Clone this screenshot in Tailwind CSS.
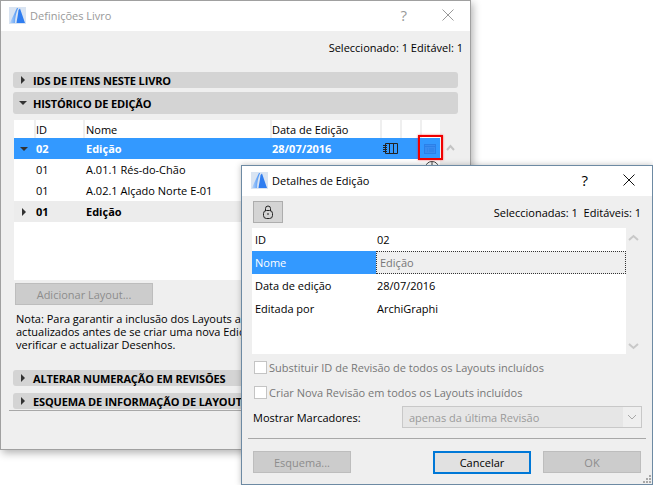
<!DOCTYPE html>
<html lang="pt">
<head>
  <meta charset="UTF-8" />
  <title>Definições Livro</title>
  <script src="https://cdn.jsdelivr.net/npm/@tailwindcss/browser@4"></script>
</head>
<body class="bg-white">
  <div class="relative w-[653px] h-[485px] overflow-hidden bg-white font-['Open_Sans',sans-serif] text-[11px] leading-[13px] text-black">

    <!-- janela de trás -->
    <div class="absolute left-0 top-0 w-[471px] h-[450px] flex flex-col bg-[#efefef] border border-[#a0a0a0] shadow-[2px_3px_8px_rgba(0,0,0,0.3)]">
      <div class="h-[30px] shrink-0 bg-white flex items-center pl-[8px] pb-[2px]">
        <svg width="17" height="17" viewBox="0 0 17 17" class="shrink-0">
          <defs><linearGradient id="logoA" x1="0" y1="0" x2="1" y2="0"><stop offset="0" stop-color="#b9d6fa" /><stop offset="1" stop-color="#3f8df5" /></linearGradient></defs>
          <rect width="17" height="17" fill="#d9e4f2" />
          <path d="M1 16 C3 11 6 5 8 1 H9 C7 6 6 11 6 16 Z" fill="url(#logoA)" />
          <path d="M9.5 3 C9 8 8 12 7.5 16 H16 L11 1.5 Z" fill="#2f7df0" />
        </svg>
        <span class="ml-[4px] text-[#999]">Definições Livro</span>
        <span class="ml-auto text-[15px] text-[#999] mr-[35px]">?</span>
        <svg width="12" height="12" viewBox="0 0 12 12" class="mr-[16px]"><path d="M.5.5l11 11M11.5.5l-11 11" stroke="#999" fill="none" /></svg>
      </div>

      <div class="h-[17px] mt-[10px] shrink-0 pr-[7px] text-right">Seleccionado: 1 Editável: 1</div>

      <div class="mt-[14px] mx-[12px] h-[16px] shrink-0 bg-[#d4d4d4] rounded-[3px] flex items-center font-bold tracking-[-0.15px] pl-[8px]">
        <span class="w-0 h-0 border-y-[4px] border-y-transparent border-l-[4px] border-l-[#333]"></span>
        <span class="ml-[8px]">IDS DE ITENS NESTE LIVRO</span>
      </div>
      <div class="mt-[4px] mx-[12px] h-[22px] shrink-0 bg-[#d4d4d4] rounded-[3px] flex items-center font-bold tracking-[-0.15px] pl-[6px]">
        <span class="w-0 h-0 border-x-[4px] border-x-transparent border-t-[4px] border-t-[#333]"></span>
        <span class="ml-[6px]">HISTÓRICO DE EDIÇÃO</span>
      </div>

      <!-- tabela -->
      <div class="relative mt-[6px] ml-[13px] w-[426px] h-[160px] shrink-0 bg-white">
        <div class="grid grid-cols-[20px_49px_187px_110px_20px_20px_20px] h-[18px] items-center">
          <span class="h-full"></span>
          <span class="h-full border-l-2 border-[#efefef] flex items-center">ID</span>
          <span class="h-full border-l-2 border-[#efefef] pl-[1px] flex items-center">Nome</span>
          <span class="h-full border-l-2 border-[#efefef] flex items-center">Data de Edição</span>
          <span class="h-full border-l-2 border-[#efefef]"></span>
          <span class="h-full border-l-2 border-[#efefef]"></span>
          <span class="h-full border-l-2 border-[#efefef]"></span>
        </div>
        <div class="grid grid-cols-[20px_49px_187px_110px_20px_20px_20px] h-[21px] items-center bg-[#3399ff] font-bold text-white">
          <span class="justify-self-center w-0 h-0 border-x-[4px] border-x-transparent border-t-[4px] border-t-[#333]"></span>
          <span class="pl-[2px]">02</span>
          <span class="pl-[3px]">Edição</span>
          <span class="pl-[2px]">28/07/2016</span>
          <svg width="16" height="11" viewBox="0 0 16 11" class="justify-self-center" fill="none" stroke="#222"><path d="M3.5.5h12v10h-12zM7.5.5v10M11.5.5v10M1 2.5h4M1 4.5h4M1 6.5h4M1 8.5h4" /></svg>
          <span></span>
          <svg width="12" height="10" viewBox="0 0 12 10" class="justify-self-center"><rect x=".5" y=".5" width="11" height="9" fill="#3a8cf0" stroke="#2b80e8" /><path d="M1 2.5h10M3 5h1M5 5h5M3 7h1M5 7h5" stroke="#2b80e8" /></svg>
        </div>
        <div class="grid grid-cols-[20px_49px_187px_110px_20px_20px_20px] h-[21px] items-center">
          <span></span><span class="pl-[2px]">01</span><span class="pl-[3px]">A.01.1 Rés-do-Chão</span>
        </div>
        <div class="grid grid-cols-[20px_49px_187px_110px_20px_20px_20px] h-[21px] items-center">
          <span></span><span class="pl-[2px]">01</span><span class="pl-[3px]">A.02.1 Alçado Norte E-01</span>
        </div>
        <div class="grid grid-cols-[20px_49px_187px_110px_20px_20px_20px] h-[21px] items-center bg-[#ececec] font-bold">
          <span class="justify-self-center w-0 h-0 border-y-[4px] border-y-transparent border-l-[4px] border-l-[#333]"></span>
          <span class="pl-[2px]">01</span><span class="pl-[3px]">Edição</span>
        </div>
        <!-- cadeado quase todo tapado pela janela da frente -->
        <svg class="absolute left-[411px] top-[41px]" width="14" height="6" viewBox="0 0 14 6" fill="none" stroke="#444"><path d="M1 5.5a6 5 0 0 1 12 0M7 1v3" /></svg>
        <!-- moldura vermelha sobre o ícone -->
        <div class="absolute left-[404px] top-[15px] w-[25px] h-[25px] border-2 border-[#f00000] shadow-[0_0_2px_rgba(255,0,0,0.6)]"></div>
      </div>
      <svg class="absolute left-[445px] top-[143px]" width="9" height="7" viewBox="0 0 9 7" fill="none" stroke="#c4c4c4" stroke-width="2"><path d="M1 6l3.5-4 3.5 4" /></svg>

      <div class="mt-[3px] ml-[14px] w-[138px] h-[22px] shrink-0 bg-[#cccccc] border border-[#bdbdbd] flex items-center justify-center text-[#8c8c8c]">Adicionar Layout...</div>

      <p class="mt-[7px] ml-[15px] whitespace-nowrap leading-[13px]">Nota: Para garantir a inclusão dos Layouts a<br />actualizados antes de se criar uma nova Edição,<br />verificar e actualizar Desenhos.</p>

      <div class="mt-[19px] mx-[12px] h-[16px] shrink-0 bg-[#d4d4d4] rounded-[3px] flex items-center font-bold tracking-[-0.15px] pl-[8px]">
        <span class="w-0 h-0 border-y-[4px] border-y-transparent border-l-[4px] border-l-[#333]"></span>
        <span class="ml-[8px]">ALTERAR NUMERAÇÃO EM REVISÕES</span>
      </div>
      <div class="mt-[7px] mx-[12px] h-[16px] shrink-0 bg-[#d4d4d4] rounded-[3px] flex items-center font-bold tracking-[-0.15px] pl-[8px]">
        <span class="w-0 h-0 border-y-[4px] border-y-transparent border-l-[4px] border-l-[#333]"></span>
        <span class="ml-[8px] whitespace-nowrap">ESQUEMA DE INFORMAÇÃO DE LAYOUT</span>
      </div>
      <div class="mt-[1px] mx-[8px] h-px shrink-0 bg-[#a8a8a8]"></div>
    </div>

    <!-- janela da frente -->
    <div class="absolute left-[241px] top-[165px] w-[412px] h-[320px] flex flex-col bg-[#efefef] border border-[#6d8aa3] shadow-[0_0_6px_rgba(0,0,0,0.25)]">
      <div class="h-[30px] shrink-0 bg-white flex items-center pl-[9px] pb-[2px]">
        <svg width="17" height="17" viewBox="0 0 17 17" class="shrink-0">
          <defs><linearGradient id="logoB" x1="0" y1="0" x2="1" y2="0"><stop offset="0" stop-color="#b9d6fa" /><stop offset="1" stop-color="#3f8df5" /></linearGradient></defs>
          <rect width="17" height="17" fill="#d9e4f2" />
          <path d="M1 16 C3 11 6 5 8 1 H9 C7 6 6 11 6 16 Z" fill="url(#logoB)" />
          <path d="M9.5 3 C9 8 8 12 7.5 16 H16 L11 1.5 Z" fill="#2f7df0" />
        </svg>
        <span class="ml-[4px]">Detalhes de Edição</span>
        <span class="ml-auto text-[15px] mr-[35px]">?</span>
        <svg width="12" height="12" viewBox="0 0 12 12" class="mr-[17px]"><path d="M.5.5l11 11M11.5.5l-11 11" stroke="#111" fill="none" /></svg>
      </div>

      <div class="h-[22px] mt-[5px] shrink-0 flex items-center pl-[11px] pr-[11px]">
        <div class="w-[30px] h-[22px] bg-[#d4d4d4] border border-[#adadad] flex items-center justify-center">
          <svg width="10" height="14" viewBox="0 0 10 14" fill="none" stroke="#222"><path d="M2.5 6V3.5a2.5 2.5 0 0 1 5 0V6" /><rect x=".5" y="5.5" width="9" height="8" rx="3" /><path d="M5 8v2" /></svg>
        </div>
        <span class="ml-auto">Seleccionadas: 1&nbsp; Editáveis: 1</span>
      </div>

      <div class="relative mt-[5px] ml-[10px] w-[374px] h-[126px] shrink-0 bg-white">
        <div class="grid grid-cols-[124px_1fr] h-[23px] items-center"><span class="pl-[3px]">ID</span><span class="pl-[1px]">02</span></div>
        <div class="grid grid-cols-[124px_1fr] h-[23px] items-center">
          <span class="h-full flex items-center pl-[3px] bg-[#3399ff] text-white">Nome</span>
          <span class="h-full flex items-center pl-[3px] bg-[#efefef] text-[#777] border border-dotted border-[#333]">Edição</span>
        </div>
        <div class="grid grid-cols-[124px_1fr] h-[23px] items-center"><span class="pl-[3px]">Data de edição</span><span class="pl-[1px]">28/07/2016</span></div>
        <div class="grid grid-cols-[124px_1fr] h-[23px] items-center"><span class="pl-[3px]">Editada por</span><span class="pl-[1px]">ArchiGraphi</span></div>
      </div>
      <svg class="absolute left-[386px] top-[68px]" width="11" height="7" viewBox="0 0 11 7" fill="none" stroke="#c8c8c8" stroke-width="2"><path d="M1 6l4.5-4 4.5 4" /></svg>
      <svg class="absolute left-[386px] top-[177px]" width="11" height="7" viewBox="0 0 11 7" fill="none" stroke="#c8c8c8" stroke-width="2"><path d="M1 1l4.5 4 4.5-4" /></svg>

      <div class="mt-[6px] ml-[12px] h-[14px] shrink-0 flex items-center text-[#777]">
        <span class="w-[13px] h-[13px] bg-white border border-[#c4c4c4]"></span>
        <span class="ml-[2px]">Substituir ID de Revisão de todos os Layouts incluídos</span>
      </div>
      <div class="mt-[11px] ml-[12px] h-[14px] shrink-0 flex items-center text-[#777]">
        <span class="w-[13px] h-[13px] bg-white border border-[#c4c4c4]"></span>
        <span class="ml-[2px]">Criar Nova Revisão em todos os Layouts incluídos</span>
      </div>
      <div class="mt-[7px] ml-[11px] h-[22px] shrink-0 flex items-center">
        <span class="w-[149px]">Mostrar Marcadores:</span>
        <div class="w-[240px] h-[22px] bg-[#e6e6e6] border border-[#c8c8c8] flex items-center pl-[6px] text-[#9a9a9a]">
          apenas da última Revisão
          <span class="ml-auto w-[18px] h-full bg-[#efefef] flex items-center justify-center">
            <svg width="10" height="6" viewBox="0 0 10 6" fill="none" stroke="#a8a8a8"><path d="M1 1l4 4 4-4" /></svg>
          </span>
        </div>
      </div>

      <div class="mt-[10px] mx-[6px] h-px shrink-0 bg-[#a8a8a8]"></div>

      <div class="mt-[12px] px-[11px] h-[22px] shrink-0 flex items-center">
        <div class="w-[98px] h-[22px] bg-[#cccccc] border border-[#bdbdbd] flex items-center justify-center text-[#8c8c8c]">Esquema...</div>
        <div class="ml-[82px] w-[98px] h-[23px] bg-[#e1e1e1] border-2 border-[#0078d7] flex items-center justify-center">Cancelar</div>
        <div class="ml-[12px] w-[98px] h-[22px] bg-[#cccccc] border border-[#bdbdbd] flex items-center justify-center text-[#8c8c8c]">OK</div>
      </div>

      <!-- pega de redimensionar -->
      <svg class="absolute right-0 bottom-0" width="9" height="9" viewBox="0 0 9 9" fill="#a8a8a8"><path d="M6 0h2v2H6zM3 3h2v2H3zM6 3h2v2H6zM0 6h2v2H0zM3 6h2v2H3zM6 6h2v2H6z" /></svg>
    </div>
  </div>
</body>
</html>
